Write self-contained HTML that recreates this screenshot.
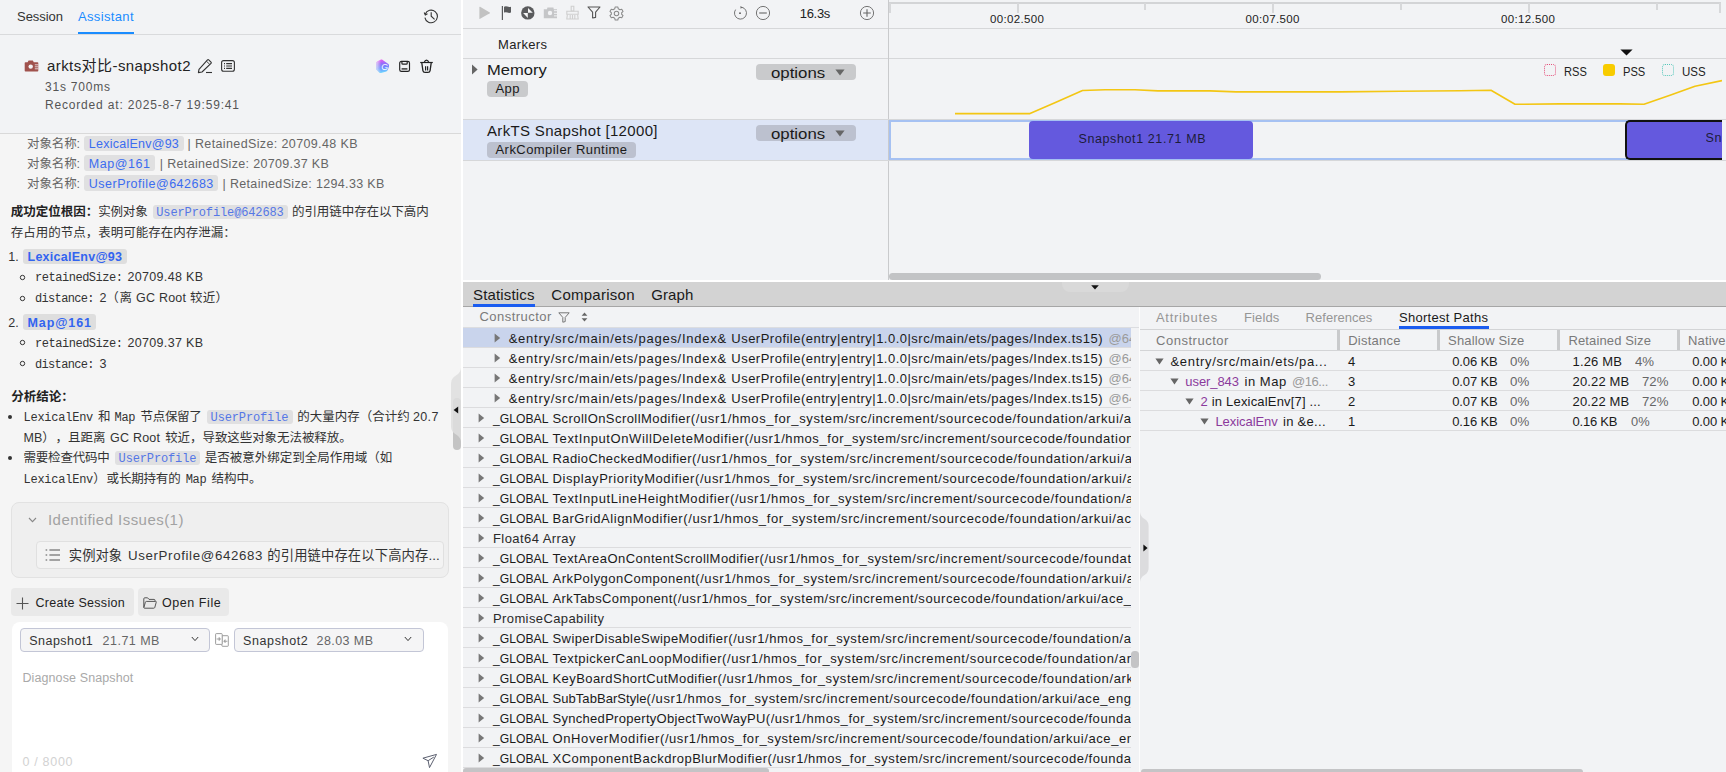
<!DOCTYPE html>
<html lang="zh"><head><meta charset="utf-8"><title>Profiler</title>
<style>
html,body{margin:0;padding:0;overflow:hidden;}
html{width:1726px;height:772px;}
body{width:1726px;height:772px;overflow:hidden;background:#f2f3f5;position:relative;
font-family:"Liberation Sans","Noto Sans CJK SC",sans-serif;}
.r{position:absolute;box-sizing:border-box;display:block;}
.t{position:absolute;white-space:pre;display:block;}
</style></head><body>
<aside class="assistant-panel">
<div class="r" style="left:0px;top:0px;width:461px;height:772px;background:#f2f3f5;"></div>
<div class="r" style="left:0px;top:134px;width:461px;height:638px;background:#f5f5f5;"></div>
<div class="r" style="left:461px;top:0px;width:2.3px;height:772px;background:#ffffff;"></div>
<div class="r" style="left:0px;top:34px;width:461px;height:1px;background:#d9dadc;"></div>
<div class="r" style="left:0px;top:133px;width:461px;height:1px;background:#d9d9d9;"></div>
<div class="r" style="left:78px;top:32px;width:56px;height:2px;background:#1a8cff;"></div>
<svg class="r" style="left:423px;top:8px;" width="16" height="16" viewBox="0 0 16 16"><path d="M2.2 6.2A6.3 6.3 0 1 1 1.9 9.6" fill="none" stroke="#333" stroke-width="1.1"/><path d="M1.2 4.6L2.3 6.9L4.5 5.8" fill="none" stroke="#333" stroke-width="1.1"/><path d="M8.2 4.2V8.2L11.6 11.4" fill="none" stroke="#333" stroke-width="1.1"/></svg>
<svg class="r" style="left:24px;top:60px;" width="15" height="12" viewBox="0 0 15 12"><path d="M1.5 2.2H3.6L4.6 0.4H8.8L9.8 2.2H13.5Q14.3 2.2 14.3 3V10.8Q14.3 11.6 13.5 11.6H1.5Q0.7 11.6 0.7 10.8V3Q0.7 2.2 1.5 2.2Z" fill="#a0524d"/><circle cx="6.7" cy="6.6" r="2.2" fill="#f2f3f5"/><path d="M10.8 4.8H14.3M10.8 6.8H14.3M10.8 8.8H14.3" stroke="#f2f3f5" stroke-width="0.8"/></svg>
<svg class="r" style="left:197px;top:58px;" width="16" height="16" viewBox="0 0 16 16"><path d="M2 11.4L10.5 1.8Q11.1 1.2 11.7 1.8L14 4.1Q14.6 4.7 14 5.3L5 14L1.4 14.6Z" fill="none" stroke="#333" stroke-width="1.1" stroke-linejoin="round"/><path d="M9.4 3.2L12.8 6.4" stroke="#333" stroke-width="0.9"/><path d="M9 14.5H15" stroke="#333" stroke-width="1.1"/></svg>
<svg class="r" style="left:221px;top:60px;" width="15" height="12" viewBox="0 0 15 12"><rect x="0.6" y="0.6" width="12.8" height="10.6" rx="2" fill="none" stroke="#333" stroke-width="1.1"/><path d="M3 3.6H4M5.2 3.6H11M3 6H4M5.2 6H11M3 8.4H4M5.2 8.4H11" stroke="#333" stroke-width="1.1"/></svg>
<svg class="r" style="left:375px;top:59px;" width="15" height="15" viewBox="0 0 15 15"><defs><linearGradient id="gb" x1="0.35" y1="0" x2="0.5" y2="1"><stop offset="0" stop-color="#ee5af0"/><stop offset="0.3" stop-color="#9a6cf8"/><stop offset="0.62" stop-color="#6e8cff"/><stop offset="1" stop-color="#6fdcff"/></linearGradient><linearGradient id="gf" x1="0" y1="0" x2="1" y2="0"><stop offset="0" stop-color="#f2f3f5" stop-opacity="0.75"/><stop offset="0.38" stop-color="#f2f3f5" stop-opacity="0"/></linearGradient></defs><path id="gp" d="M7 0.5L13.4 5Q14.4 6 14 7.4L12.8 11Q12.4 12 11.4 12.4L6 14Q5 14.2 4.2 13.4L1.6 10.8Q1.2 10.2 1.2 9.4V4Q1.2 3 2.2 2.4L6 0.6Q6.6 0.3 7 0.5Z" fill="url(#gb)"/><path d="M7 0.5L13.4 5Q14.4 6 14 7.4L12.8 11Q12.4 12 11.4 12.4L6 14Q5 14.2 4.2 13.4L1.6 10.8Q1.2 10.2 1.2 9.4V4Q1.2 3 2.2 2.4L6 0.6Q6.6 0.3 7 0.5Z" fill="url(#gf)"/><text x="6.2" y="11.4" font-size="8.6" font-weight="400" font-style="italic" fill="#fff" font-family="Liberation Sans,sans-serif">G</text></svg>
<svg class="r" style="left:398px;top:60px;" width="13" height="13" viewBox="0 0 13 13"><rect x="1.7" y="1.4" width="9.8" height="10" rx="1.7" fill="none" stroke="#222" stroke-width="1.15"/><path d="M3.9 1.4V3.3Q3.9 4.2 4.8 4.2H8.3Q9.2 4.2 9.2 3.3V1.4" fill="none" stroke="#222" stroke-width="1.2"/><rect x="3.5" y="8" width="6" height="1.7" rx="0.5" fill="#555"/></svg>
<svg class="r" style="left:420px;top:59px;" width="14" height="15" viewBox="0 0 14 15"><path d="M0.2 3.5H12.8" stroke="#222" stroke-width="1.2"/><path d="M4.2 3.4Q5 1.2 6.5 1.2Q8 1.2 8.8 3.4" fill="none" stroke="#222" stroke-width="1.2"/><path d="M1.8 3.8L2.9 11.6Q3.2 13.4 5 13.4H8Q9.8 13.4 10.1 11.6L11.2 3.8" fill="none" stroke="#222" stroke-width="1.3"/><path d="M5.6 7.2V11.6M7.6 7.2V11.6" stroke="#222" stroke-width="1.2"/></svg>
<div class="r" style="left:84px;top:135.5px;width:99.8px;height:15.5px;background:#e0e0e1;border-radius:3px;"></div>
<div class="r" style="left:84px;top:155.3px;width:70.5px;height:15.5px;background:#e0e0e1;border-radius:3px;"></div>
<div class="r" style="left:84px;top:175.3px;width:133.5px;height:15.5px;background:#e0e0e1;border-radius:3px;"></div>
<div class="r" style="left:153px;top:205px;width:134.5px;height:14px;background:#e0e0e1;border-radius:3px;"></div>
<div class="r" style="left:23px;top:248.5px;width:103.5px;height:15.5px;background:#dedede;border-radius:3px;"></div>
<svg class="r" style="left:18.5px;top:273.5px;" width="7" height="7" viewBox="0 0 7 7"><circle cx="3.5" cy="3.5" r="2.2" fill="none" stroke="#333" stroke-width="1"/></svg>
<svg class="r" style="left:18.5px;top:294.5px;" width="7" height="7" viewBox="0 0 7 7"><circle cx="3.5" cy="3.5" r="2.2" fill="none" stroke="#333" stroke-width="1"/></svg>
<div class="r" style="left:23px;top:314.3px;width:72.6px;height:15.5px;background:#dedede;border-radius:3px;"></div>
<svg class="r" style="left:18.5px;top:339.2px;" width="7" height="7" viewBox="0 0 7 7"><circle cx="3.5" cy="3.5" r="2.2" fill="none" stroke="#333" stroke-width="1"/></svg>
<svg class="r" style="left:18.5px;top:360.2px;" width="7" height="7" viewBox="0 0 7 7"><circle cx="3.5" cy="3.5" r="2.2" fill="none" stroke="#333" stroke-width="1"/></svg>
<div class="r" style="left:8.3px;top:415.3px;width:4px;height:4px;background:#333;border-radius:2px;"></div>
<div class="r" style="left:207px;top:410px;width:85.6px;height:14px;background:#e0e0e1;border-radius:3px;"></div>
<div class="r" style="left:8.3px;top:456px;width:4px;height:4px;background:#333;border-radius:2px;"></div>
<div class="r" style="left:115px;top:451.2px;width:85.4px;height:14px;background:#e0e0e1;border-radius:3px;"></div>
<div class="r" style="left:11px;top:502px;width:438px;height:76px;background:#efefef;border:1px solid #e2e2e2;border-radius:8px;"></div>
<svg class="r" style="left:28px;top:516px;" width="9" height="8" viewBox="0 0 9 8"><path d="M1 2L4.5 5.6L8 2" fill="none" stroke="#888" stroke-width="1.1"/></svg>
<div class="r" style="left:36px;top:541px;width:408px;height:28px;background:#f3f3f3;border:1px solid #e0e0e0;border-radius:4px;"></div>
<svg class="r" style="left:45px;top:548px;" width="16" height="14" viewBox="0 0 16 14"><path d="M0.6 2H2.2M4.4 2H15M0.6 7H2.2M4.4 7H15M0.6 12H2.2M4.4 12H15" stroke="#555" stroke-width="1.1"/></svg>
<div class="r" style="left:11px;top:588px;width:123px;height:28px;background:#e9e9e9;border-radius:4px;"></div>
<svg class="r" style="left:16px;top:597px;" width="13" height="13" viewBox="0 0 13 13"><path d="M6.5 0.5V12.5M0.5 6.5H12.5" stroke="#555" stroke-width="1.1"/></svg>
<div class="r" style="left:138px;top:588px;width:91px;height:28px;background:#e9e9e9;border-radius:4px;"></div>
<svg class="r" style="left:143px;top:597px;" width="14" height="12" viewBox="0 0 14 12"><path d="M0.8 10.4V1.8Q0.8 0.8 1.8 0.8H4.6L6 2.4H11Q12 2.4 12 3.4V4.4" fill="none" stroke="#555" stroke-width="1"/><path d="M0.8 10.6L2.4 5.2Q2.6 4.4 3.4 4.4H12.6Q13.6 4.4 13.2 5.4L11.8 10.4Q11.6 11.2 10.8 11.2H1.6Q0.8 11.2 0.8 10.6Z" fill="none" stroke="#555" stroke-width="1"/></svg>
<div class="r" style="left:12px;top:622px;width:436px;height:160px;background:#ffffff;border-radius:8px;"></div>
<div class="r" style="left:20.2px;top:628px;width:189.5px;height:23.5px;background:#f5f5f6;border:1px solid #c3c6d6;border-radius:4px;"></div>
<svg class="r" style="left:190.7px;top:636.4px;" width="8" height="6" viewBox="0 0 8 6"><path d="M0.8 1L4 4.6L7.2 1" fill="none" stroke="#333" stroke-width="1"/></svg>
<div class="r" style="left:234.2px;top:628px;width:189.5px;height:23.5px;background:#f5f5f6;border:1px solid #c3c6d6;border-radius:4px;"></div>
<svg class="r" style="left:404.4px;top:636.4px;" width="8" height="6" viewBox="0 0 8 6"><path d="M0.8 1L4 4.6L7.2 1" fill="none" stroke="#333" stroke-width="1"/></svg>
<svg class="r" style="left:215px;top:633px;" width="14" height="14" viewBox="0 0 14 14"><rect x="6.9" y="2.7" width="6.4" height="10.6" rx="0.7" fill="#fff" stroke="#8c8c8c" stroke-width="0.85"/><rect x="0.6" y="0.6" width="6.6" height="10.8" rx="0.7" fill="#fff" stroke="#8c8c8c" stroke-width="0.85"/><path d="M1.6 6H5M3.7 4.5L5.2 6L3.7 7.5" fill="none" stroke="#a2a2a2" stroke-width="1.1"/><path d="M12.4 8.2H9.2M10.5 6.7L9 8.2L10.5 9.7" fill="none" stroke="#a2a2a2" stroke-width="1.1"/></svg>
<svg class="r" style="left:422px;top:753px;" width="16" height="16" viewBox="0 0 16 16"><path d="M0.9 5.2L14.5 1.4L7.5 14.6L6.1 7.7Z" fill="none" stroke="#5c6070" stroke-width="1" stroke-linejoin="round"/><path d="M6.1 7.7L11.8 4.1" stroke="#5c6070" stroke-width="1"/></svg>
<div class="r" style="left:453px;top:398px;width:7.6px;height:51.5px;background:#c4c4c4;border-radius:4px;"></div>
<svg class="r" style="left:450px;top:368px;" width="11" height="74" viewBox="0 0 11 74"><path d="M11 0Q10.6 5 6 7.5Q1 10 1 16V58Q1 64 6 66.5Q10.6 69 11 74Z" fill="#dedede" fill-opacity="0.86"/></svg>
<svg class="r" style="left:453px;top:406.3px;" width="6" height="8" viewBox="0 0 6 8"><path d="M5.2 0.4V7.6L0.6 4Z" fill="#111"/></svg>
<span class="t" id="t0" style="left:17px;top:7.4px;font-size:13px;line-height:20px;color:#333;letter-spacing:-0.042px;">Session</span>
<span class="t" id="t1" style="left:78px;top:7.4px;font-size:13px;line-height:20px;color:#1a8cff;letter-spacing:0.344px;">Assistant</span>
<span class="t" id="t2" style="left:47px;top:55.4px;font-size:15px;line-height:22px;color:#222;letter-spacing:0.423px;">arkts对比-snapshot2</span>
<span class="t" id="t3" style="left:45px;top:78.4px;font-size:12px;line-height:18px;color:#555;letter-spacing:0.787px;">31s 700ms</span>
<span class="t" id="t4" style="left:45px;top:96.4px;font-size:12px;line-height:18px;color:#555;letter-spacing:0.823px;">Recorded at: 2025-8-7 19:59:41</span>
<span class="t" id="t5" style="left:27px;top:134.9px;font-size:12.5px;line-height:19px;color:#666;letter-spacing:-0.121px;">对象名称:</span>
<span class="t" id="t6" style="left:88.8px;top:134.9px;font-size:12.5px;line-height:19px;color:#3b6cf0;letter-spacing:0.246px;">LexicalEnv@93</span>
<span class="t" id="t7" style="left:187.5px;top:134.9px;font-size:12.5px;line-height:19px;color:#666;letter-spacing:0.373px;">| RetainedSize: 20709.48 KB</span>
<span class="t" id="t8" style="left:27px;top:154.7px;font-size:12.5px;line-height:19px;color:#666;letter-spacing:-0.121px;">对象名称:</span>
<span class="t" id="t9" style="left:88.8px;top:154.7px;font-size:12.5px;line-height:19px;color:#3b6cf0;letter-spacing:0.554px;">Map@161</span>
<span class="t" id="t10" style="left:159.8px;top:154.7px;font-size:12.5px;line-height:19px;color:#666;letter-spacing:0.334px;">| RetainedSize: 20709.37 KB</span>
<span class="t" id="t11" style="left:27px;top:174.7px;font-size:12.5px;line-height:19px;color:#666;letter-spacing:-0.121px;">对象名称:</span>
<span class="t" id="t12" style="left:88.8px;top:174.7px;font-size:12.5px;line-height:19px;color:#3b6cf0;letter-spacing:0.486px;">UserProfile@642683</span>
<span class="t" id="t13" style="left:222.5px;top:174.7px;font-size:12.5px;line-height:19px;color:#666;letter-spacing:0.338px;">| RetainedSize: 1294.33 KB</span>
<span class="t" id="t14" style="left:10.8px;top:203.4px;font-size:12.5px;line-height:19px;color:#222;font-weight:700;">成功定位根因：</span>
<span class="t" id="t15" style="left:98.2px;top:203.4px;font-size:12.5px;line-height:19px;color:#333;letter-spacing:-0.172px;">实例对象</span>
<span class="t" id="t16" style="left:156.3px;top:203.9px;font-size:12px;line-height:18px;color:#5577e6;font-family:'Liberation Mono','Noto Sans CJK SC',monospace;letter-spacing:-0.125px;">UserProfile@642683</span>
<span class="t" id="t17" style="left:292px;top:203.4px;font-size:12.5px;line-height:19px;color:#333;letter-spacing:-0.072px;">的引用链中存在以下高内</span>
<span class="t" id="t18" style="left:10.8px;top:224.1px;font-size:12.5px;line-height:19px;color:#333;">存占用的节点，表明可能存在内存泄漏：</span>
<span class="t" id="t19" style="left:8.3px;top:247.9px;font-size:12.5px;line-height:19px;color:#333;">1.</span>
<span class="t" id="t20" style="left:27.5px;top:247.9px;font-size:12.5px;line-height:19px;color:#3264f0;font-weight:700;letter-spacing:0.258px;">LexicalEnv@93</span>
<span class="t" id="t21" style="left:35px;top:268.9px;font-size:12px;line-height:18px;color:#333;font-family:'Liberation Mono','Noto Sans CJK SC',monospace;letter-spacing:-0.469px;">retainedSize:</span>
<span class="t" id="t22" style="left:127.5px;top:268.4px;font-size:12.5px;line-height:19px;color:#333;letter-spacing:0.320px;">20709.48 KB</span>
<span class="t" id="t23" style="left:35px;top:289.9px;font-size:12px;line-height:18px;color:#333;font-family:'Liberation Mono','Noto Sans CJK SC',monospace;letter-spacing:-0.664px;">distance:</span>
<span class="t" id="t24" style="left:99.5px;top:289.4px;font-size:12.5px;line-height:19px;color:#333;">2</span>
<span class="t" id="t25" style="left:106.3px;top:289.4px;font-size:12.5px;line-height:19px;color:#333;">（</span>
<span class="t" id="t26" style="left:119.6px;top:289.4px;font-size:12.5px;line-height:19px;color:#333;letter-spacing:0.229px;">离 GC Root 较近</span>
<span class="t" id="t27" style="left:215.6px;top:289.4px;font-size:12.5px;line-height:19px;color:#333;">）</span>
<span class="t" id="t28" style="left:8.3px;top:313.7px;font-size:12.5px;line-height:19px;color:#333;">2.</span>
<span class="t" id="t29" style="left:27.5px;top:313.7px;font-size:12.5px;line-height:19px;color:#3264f0;font-weight:700;letter-spacing:0.909px;">Map@161</span>
<span class="t" id="t30" style="left:35px;top:334.6px;font-size:12px;line-height:18px;color:#333;font-family:'Liberation Mono','Noto Sans CJK SC',monospace;letter-spacing:-0.469px;">retainedSize:</span>
<span class="t" id="t31" style="left:127.5px;top:334.1px;font-size:12.5px;line-height:19px;color:#333;letter-spacing:0.320px;">20709.37 KB</span>
<span class="t" id="t32" style="left:35px;top:355.6px;font-size:12px;line-height:18px;color:#333;font-family:'Liberation Mono','Noto Sans CJK SC',monospace;letter-spacing:-0.664px;">distance:</span>
<span class="t" id="t33" style="left:99.5px;top:355.1px;font-size:12.5px;line-height:19px;color:#333;">3</span>
<span class="t" id="t34" style="left:11.2px;top:388.2px;font-size:12.5px;line-height:19px;color:#222;font-weight:700;">分析结论：</span>
<span class="t" id="t35" style="left:23.5px;top:408.7px;font-size:12px;line-height:18px;color:#333;font-family:'Liberation Mono','Noto Sans CJK SC',monospace;letter-spacing:-0.246px;">LexicalEnv</span>
<span class="t" id="t36" style="left:98px;top:408.2px;font-size:12.5px;line-height:19px;color:#333;">和</span>
<span class="t" id="t37" style="left:114.6px;top:408.7px;font-size:12px;line-height:18px;color:#333;font-family:'Liberation Mono','Noto Sans CJK SC',monospace;letter-spacing:-0.405px;">Map</span>
<span class="t" id="t38" style="left:140.5px;top:408.2px;font-size:12.5px;line-height:19px;color:#333;letter-spacing:-0.304px;">节点保留了</span>
<span class="t" id="t39" style="left:210.6px;top:408.7px;font-size:12px;line-height:18px;color:#5577e6;font-family:'Liberation Mono','Noto Sans CJK SC',monospace;letter-spacing:-0.142px;">UserProfile</span>
<span class="t" id="t40" style="left:297.2px;top:408.2px;font-size:12.5px;line-height:19px;color:#333;">的大量内存（合计约</span>
<span class="t" id="t41" style="left:413px;top:408.2px;font-size:12.5px;line-height:19px;color:#333;letter-spacing:0.352px;">20.7</span>
<span class="t" id="t42" style="left:23.5px;top:429px;font-size:12.5px;line-height:19px;color:#333;">MB）</span>
<span class="t" id="t43" style="left:55.5px;top:429px;font-size:12.5px;line-height:19px;color:#333;">，且距离</span>
<span class="t" id="t44" style="left:110px;top:429px;font-size:12.5px;line-height:19px;color:#333;letter-spacing:0.227px;">GC Root</span>
<span class="t" id="t45" style="left:165.2px;top:429px;font-size:12.5px;line-height:19px;color:#333;letter-spacing:-0.073px;">较近，导致这些对象无法被释放。</span>
<span class="t" id="t46" style="left:23.5px;top:449.4px;font-size:12.5px;line-height:19px;color:#333;letter-spacing:-0.203px;">需要检查代码中</span>
<span class="t" id="t47" style="left:118.6px;top:449.9px;font-size:12px;line-height:18px;color:#5577e6;font-family:'Liberation Mono','Noto Sans CJK SC',monospace;letter-spacing:-0.142px;">UserProfile</span>
<span class="t" id="t48" style="left:204.7px;top:449.4px;font-size:12.5px;line-height:19px;color:#333;">是否被意外绑定到全局作用域（如</span>
<span class="t" id="t49" style="left:23.5px;top:470.9px;font-size:12px;line-height:18px;color:#333;font-family:'Liberation Mono','Noto Sans CJK SC',monospace;letter-spacing:-0.246px;">LexicalEnv</span>
<span class="t" id="t50" style="left:93.3px;top:470.4px;font-size:12.5px;line-height:19px;color:#333;">）</span>
<span class="t" id="t51" style="left:106.6px;top:470.4px;font-size:12.5px;line-height:19px;color:#333;letter-spacing:-0.183px;">或长期持有的</span>
<span class="t" id="t52" style="left:185.8px;top:470.9px;font-size:12px;line-height:18px;color:#333;font-family:'Liberation Mono','Noto Sans CJK SC',monospace;letter-spacing:-0.405px;">Map</span>
<span class="t" id="t53" style="left:211.4px;top:470.4px;font-size:12.5px;line-height:19px;color:#333;">结构中。</span>
<span class="t" id="t54" style="left:48px;top:508.5px;font-size:15px;line-height:22px;color:#a2a2a2;letter-spacing:0.456px;">Identified Issues(1)</span>
<span class="t" id="t55" style="left:68.8px;top:546.4px;font-size:13.3px;line-height:20px;color:#333;letter-spacing:0.037px;">实例对象</span>
<span class="t" id="t56" style="left:127.9px;top:546.4px;font-size:13.3px;line-height:20px;color:#333;letter-spacing:0.645px;">UserProfile@642683</span>
<span class="t" id="t57" style="left:267.3px;top:546.4px;font-size:13.3px;line-height:20px;color:#333;letter-spacing:0.132px;">的引用链中存在以下高内存...</span>
<span class="t" id="t58" style="left:35.4px;top:594.4px;font-size:12.5px;line-height:19px;color:#222;letter-spacing:0.295px;">Create Session</span>
<span class="t" id="t59" style="left:162px;top:594.4px;font-size:12.5px;line-height:19px;color:#222;letter-spacing:0.562px;">Open File</span>
<span class="t" id="t60" style="left:29.3px;top:632px;font-size:12.5px;line-height:19px;color:#333;letter-spacing:0.465px;">Snapshot1</span>
<span class="t" id="t61" style="left:102.6px;top:632px;font-size:12.5px;line-height:19px;color:#666;letter-spacing:0.469px;">21.71 MB</span>
<span class="t" id="t62" style="left:243px;top:632px;font-size:12.5px;line-height:19px;color:#333;letter-spacing:0.627px;">Snapshot2</span>
<span class="t" id="t63" style="left:316.6px;top:632px;font-size:12.5px;line-height:19px;color:#666;letter-spacing:0.412px;">28.03 MB</span>
<span class="t" id="t64" style="left:22.4px;top:669.4px;font-size:12.5px;line-height:19px;color:#a9a9a9;letter-spacing:0.112px;">Diagnose Snapshot</span>
<span class="t" id="t65" style="left:22.4px;top:752.9px;font-size:12.5px;line-height:19px;color:#d2d2d2;letter-spacing:0.702px;">0 / 8000</span>
</aside>
<main class="profiler">
<div class="r" style="left:463px;top:28px;width:1263px;height:1px;background:#d6d7d9;"></div>
<div class="r" style="left:463px;top:58px;width:1263px;height:1px;background:#d6d7d9;"></div>
<div class="r" style="left:888px;top:0px;width:1px;height:282px;background:#c9cacc;"></div>
<svg class="r" style="left:478px;top:6px;" width="13" height="14" viewBox="0 0 13 14"><path d="M1.4 1.2Q1.4 0.4 2.1 0.8L11.8 6.4Q12.4 6.8 11.8 7.2L2.1 12.8Q1.4 13.2 1.4 12.4Z" fill="#c2c2c2"/></svg>
<svg class="r" style="left:500px;top:5px;" width="12" height="16" viewBox="0 0 12 16"><path d="M2.4 1V15" stroke="#5a5b5d" stroke-width="1.2"/><path d="M4 1.7Q5.6 0.9 7.4 1.6Q9.2 2.3 11 1.7V7.5Q9.2 8.3 7.4 7.5Q5.6 6.8 4 7.6Z" fill="#5a5b5d"/></svg>
<svg class="r" style="left:520px;top:5px;" width="16" height="16" viewBox="0 0 16 16"><circle cx="7.8" cy="7.9" r="6.7" fill="#5a5b5d"/><path d="M8 2.9L12.8 7.7H8Z" fill="#f6f6f7"/><path d="M3.1 8.1H7.8V12.9Z" fill="#f6f6f7"/></svg>
<svg class="r" style="left:543px;top:7px;" width="15" height="12" viewBox="0 0 15 12"><path d="M0.8 2.3H4L4.4 0.4H10.4L10.8 2.3H14V11.2H0.8Z" fill="#c5c6c8"/><circle cx="7" cy="6" r="2.2" fill="#f2f3f5"/><path d="M11 3.7H14.2M11 6.3H14.2M11 8.9H14.2" stroke="#f2f3f5" stroke-width="1"/></svg>
<svg class="r" style="left:565px;top:5px;" width="15" height="15" viewBox="0 0 15 15"><path d="M6.2 1.2H8.8V6H6.2Z" fill="none" stroke="#cfcfcf" stroke-width="1.1"/><path d="M1.8 6.2H13.2V9.2H1.8Z" fill="none" stroke="#cfcfcf" stroke-width="1.1"/><path d="M2.4 9.4L1.8 14H13.2L12.6 9.4M5.2 10V14M7.5 10V14M9.8 10V14" fill="none" stroke="#cfcfcf" stroke-width="1.1"/></svg>
<svg class="r" style="left:587px;top:6px;" width="14" height="13" viewBox="0 0 14 13"><path d="M1 1H13L8.6 6.2V11.4L5.6 12V6.2Z" fill="none" stroke="#555" stroke-width="1.1" stroke-linejoin="round"/></svg>
<svg class="r" style="left:608.5px;top:5.5px;" width="15" height="15" viewBox="0 0 16 16"><path d="M6.6 1H9.4L9.9 3L11.6 4L13.6 3.4L15 5.8L13.5 7.2V8.8L15 10.2L13.6 12.6L11.6 12L9.9 13L9.4 15H6.6L6.1 13L4.4 12L2.4 12.6L1 10.2L2.5 8.8V7.2L1 5.8L2.4 3.4L4.4 4L6.1 3Z" fill="none" stroke="#8a8a8a" stroke-width="1.1" stroke-linejoin="round"/><circle cx="8" cy="8" r="2.4" fill="none" stroke="#8a8a8a" stroke-width="1.1"/></svg>
<svg class="r" style="left:733px;top:6px;" width="14" height="14" viewBox="0 0 14 14"><path d="M8.6 1.2A6 6 0 1 1 2.6 3.6" fill="none" stroke="#666" stroke-width="0.9"/><path d="M7.4 0L9.4 1.4L7.6 2.8" fill="#666"/><circle cx="7" cy="7.2" r="0.9" fill="#555"/></svg>
<svg class="r" style="left:755px;top:5px;" width="16" height="16" viewBox="0 0 16 16"><circle cx="8" cy="8" r="6.6" fill="none" stroke="#666" stroke-width="0.9"/><path d="M4.2 8H11.8" stroke="#666" stroke-width="1.1"/></svg>
<svg class="r" style="left:859px;top:5px;" width="16" height="16" viewBox="0 0 16 16"><circle cx="8" cy="8" r="6.6" fill="none" stroke="#666" stroke-width="0.9"/><path d="M4.2 8H11.8M8 4.2V11.8" stroke="#666" stroke-width="1.1"/></svg>
<div class="r" style="left:463px;top:119px;width:1263px;height:1px;background:#d6d7d9;"></div>
<div class="r" style="left:463px;top:120px;width:425px;height:40px;background:#dde5f6;"></div>
<div class="r" style="left:463px;top:160px;width:1263px;height:1px;background:#d6d7d9;"></div>
<svg class="r" style="left:471px;top:64px;" width="8" height="11" viewBox="0 0 8 11"><path d="M1 0.6L6.6 5.5L1 10.4Z" fill="#666"/></svg>
<div class="r" style="left:487px;top:81px;width:41px;height:16px;background:#c9cacc;border-radius:4px;"></div>
<div class="r" style="left:756px;top:64.3px;width:100px;height:15.5px;background:#c9cacc;border-radius:4px;"></div>
<svg class="r" style="left:835px;top:68.8px;" width="10" height="7" viewBox="0 0 10 7"><path d="M0.4 0.4H9.6L5 6.6Z" fill="#666"/></svg>
<div class="r" style="left:756px;top:125.3px;width:100px;height:15.5px;background:#bcc1cf;border-radius:4px;"></div>
<svg class="r" style="left:835px;top:129.8px;" width="10" height="7" viewBox="0 0 10 7"><path d="M0.4 0.4H9.6L5 6.6Z" fill="#666"/></svg>
<div class="r" style="left:487px;top:142px;width:148.5px;height:16px;background:#bcc1cf;border-radius:4px;"></div>
<div class="r" style="left:889px;top:2px;width:832px;height:2px;background:#d3d4d6;"></div>
<div class="r" style="left:889px;top:3px;width:2px;height:10.4px;background:#d7d8da;"></div>
<div class="r" style="left:1017px;top:3px;width:2px;height:10.4px;background:#d7d8da;"></div>
<div class="r" style="left:1272px;top:3px;width:2px;height:10.4px;background:#d7d8da;"></div>
<div class="r" style="left:1528px;top:3px;width:2px;height:10.4px;background:#d7d8da;"></div>
<div class="r" style="left:1719px;top:3px;width:2px;height:10.4px;background:#d7d8da;"></div>
<div class="r" style="left:1144px;top:3px;width:2px;height:6.8px;background:#d7d8da;"></div>
<div class="r" style="left:1400px;top:3px;width:2px;height:6.8px;background:#d7d8da;"></div>
<div class="r" style="left:1656px;top:3px;width:2px;height:6.8px;background:#d7d8da;"></div>
<svg class="r" style="left:1620px;top:48.5px;" width="13" height="7" viewBox="0 0 13 7"><path d="M0.4 0.4H12.6L6.5 6.6Z" fill="#111"/></svg>
<div class="r" style="left:1544px;top:64px;width:12px;height:12px;border:1px dotted #e4527c;border-radius:3px;"></div>
<div class="r" style="left:1603px;top:64px;width:12px;height:12px;background:#f8cc00;border-radius:3px;"></div>
<div class="r" style="left:1662px;top:64px;width:12px;height:12px;border:1px dotted #56c8ba;border-radius:3px;"></div>
<svg class="r" style="left:889px;top:60px;" width="833" height="58" viewBox="0 0 833 58"><polyline points="66,53.6 141,53.6 167,42.3 193.5,30.5 216,29.7 246,29.7 269,30.9 321,30.9 347,31.9 451,31.9 511,31.3 571,30.7 602,30.3 626,44.3 671,43.9 731,43.9 755,44.3 781,35.3 806,26.3 833,20.6" fill="none" stroke="#f3c613" stroke-width="1.6" stroke-linejoin="round"/></svg>
<div class="r" style="left:888.6px;top:120px;width:833.4px;height:40px;border:2px solid #a6c1f2;border-right:none;"></div>
<div class="r" style="left:1029px;top:121px;width:223.6px;height:38px;background:#6459de;border-radius:4px;"></div>
<div class="r" style="left:1625px;top:120px;width:97px;height:40px;background:#6459de;border:2px solid #111;border-radius:5px 0 0 5px;border-right:none;"></div>
<div class="r" style="left:889px;top:273px;width:431.5px;height:7px;background:#c2c3c5;border-radius:3.5px;"></div>
<div class="r" style="left:463px;top:279.8px;width:1263px;height:2.4px;background:#ffffff;"></div>
<div class="r" style="left:463px;top:282.2px;width:1263px;height:24.3px;background:#d3d3d3;"></div>
<div class="r" style="left:463px;top:306px;width:1263px;height:1px;background:#a6a6a6;"></div>
<div class="r" style="left:1062px;top:282px;width:67px;height:10px;background:#d9d9d9;border-radius:0 0 8px 8px;"></div>
<svg class="r" style="left:1091px;top:284.8px;" width="8" height="5" viewBox="0 0 8 5"><path d="M0.2 0.2H7.8L4 4.6Z" fill="#111"/></svg>
<div class="r" style="left:473px;top:303.8px;width:62.2px;height:3.1px;background:#1a5cf0;"></div>
<svg class="r" style="left:558px;top:311.5px;" width="12" height="11" viewBox="0 0 12 11"><path d="M0.8 0.8H11.2L7.2 5.4V9.6L4.8 10.2V5.4Z" fill="none" stroke="#777" stroke-width="1" stroke-linejoin="round"/></svg>
<svg class="r" style="left:580.5px;top:312.3px;" width="7" height="10" viewBox="0 0 7 10"><path d="M3.5 0.4L6.4 3.8H0.6Z M3.5 9.6L6.4 6.2H0.6Z" fill="#666"/></svg>
<div class="r" style="left:463px;top:327px;width:676px;height:1px;background:#dcdde0;"></div>
<div class="r" style="left:463px;top:328px;width:668px;height:20px;background:#c9d4ec;"></div>
<div class="r" style="left:463px;top:347px;width:668px;height:1px;background:#dcdcde;"></div>
<div class="r" style="left:463px;top:367px;width:668px;height:1px;background:#dcdcde;"></div>
<div class="r" style="left:463px;top:387px;width:668px;height:1px;background:#dcdcde;"></div>
<div class="r" style="left:463px;top:407px;width:668px;height:1px;background:#dcdcde;"></div>
<div class="r" style="left:463px;top:427px;width:668px;height:1px;background:#dcdcde;"></div>
<div class="r" style="left:463px;top:447px;width:668px;height:1px;background:#dcdcde;"></div>
<div class="r" style="left:463px;top:467px;width:668px;height:1px;background:#dcdcde;"></div>
<div class="r" style="left:463px;top:487px;width:668px;height:1px;background:#dcdcde;"></div>
<div class="r" style="left:463px;top:507px;width:668px;height:1px;background:#dcdcde;"></div>
<div class="r" style="left:463px;top:527px;width:668px;height:1px;background:#dcdcde;"></div>
<div class="r" style="left:463px;top:547px;width:668px;height:1px;background:#dcdcde;"></div>
<div class="r" style="left:463px;top:567px;width:668px;height:1px;background:#dcdcde;"></div>
<div class="r" style="left:463px;top:587px;width:668px;height:1px;background:#dcdcde;"></div>
<div class="r" style="left:463px;top:607px;width:668px;height:1px;background:#dcdcde;"></div>
<div class="r" style="left:463px;top:627px;width:668px;height:1px;background:#dcdcde;"></div>
<div class="r" style="left:463px;top:647px;width:668px;height:1px;background:#dcdcde;"></div>
<div class="r" style="left:463px;top:667px;width:668px;height:1px;background:#dcdcde;"></div>
<div class="r" style="left:463px;top:687px;width:668px;height:1px;background:#dcdcde;"></div>
<div class="r" style="left:463px;top:707px;width:668px;height:1px;background:#dcdcde;"></div>
<div class="r" style="left:463px;top:727px;width:668px;height:1px;background:#dcdcde;"></div>
<div class="r" style="left:463px;top:747px;width:668px;height:1px;background:#dcdcde;"></div>
<div class="r" style="left:463px;top:767px;width:668px;height:1px;background:#dcdcde;"></div>
<svg class="r" style="left:494.2px;top:333px;" width="7" height="10" viewBox="0 0 7 10"><path d="M0.6 0.4L6.2 5L0.6 9.6Z" fill="#777"/></svg>
<svg class="r" style="left:494.2px;top:353px;" width="7" height="10" viewBox="0 0 7 10"><path d="M0.6 0.4L6.2 5L0.6 9.6Z" fill="#777"/></svg>
<svg class="r" style="left:494.2px;top:373px;" width="7" height="10" viewBox="0 0 7 10"><path d="M0.6 0.4L6.2 5L0.6 9.6Z" fill="#777"/></svg>
<svg class="r" style="left:494.2px;top:393px;" width="7" height="10" viewBox="0 0 7 10"><path d="M0.6 0.4L6.2 5L0.6 9.6Z" fill="#777"/></svg>
<svg class="r" style="left:478.3px;top:413px;" width="7" height="10" viewBox="0 0 7 10"><path d="M0.6 0.4L6.2 5L0.6 9.6Z" fill="#777"/></svg>
<svg class="r" style="left:478.3px;top:433px;" width="7" height="10" viewBox="0 0 7 10"><path d="M0.6 0.4L6.2 5L0.6 9.6Z" fill="#777"/></svg>
<svg class="r" style="left:478.3px;top:453px;" width="7" height="10" viewBox="0 0 7 10"><path d="M0.6 0.4L6.2 5L0.6 9.6Z" fill="#777"/></svg>
<svg class="r" style="left:478.3px;top:473px;" width="7" height="10" viewBox="0 0 7 10"><path d="M0.6 0.4L6.2 5L0.6 9.6Z" fill="#777"/></svg>
<svg class="r" style="left:478.3px;top:493px;" width="7" height="10" viewBox="0 0 7 10"><path d="M0.6 0.4L6.2 5L0.6 9.6Z" fill="#777"/></svg>
<svg class="r" style="left:478.3px;top:513px;" width="7" height="10" viewBox="0 0 7 10"><path d="M0.6 0.4L6.2 5L0.6 9.6Z" fill="#777"/></svg>
<svg class="r" style="left:478.3px;top:533px;" width="7" height="10" viewBox="0 0 7 10"><path d="M0.6 0.4L6.2 5L0.6 9.6Z" fill="#777"/></svg>
<svg class="r" style="left:478.3px;top:553px;" width="7" height="10" viewBox="0 0 7 10"><path d="M0.6 0.4L6.2 5L0.6 9.6Z" fill="#777"/></svg>
<svg class="r" style="left:478.3px;top:573px;" width="7" height="10" viewBox="0 0 7 10"><path d="M0.6 0.4L6.2 5L0.6 9.6Z" fill="#777"/></svg>
<svg class="r" style="left:478.3px;top:593px;" width="7" height="10" viewBox="0 0 7 10"><path d="M0.6 0.4L6.2 5L0.6 9.6Z" fill="#777"/></svg>
<svg class="r" style="left:478.3px;top:613px;" width="7" height="10" viewBox="0 0 7 10"><path d="M0.6 0.4L6.2 5L0.6 9.6Z" fill="#777"/></svg>
<svg class="r" style="left:478.3px;top:633px;" width="7" height="10" viewBox="0 0 7 10"><path d="M0.6 0.4L6.2 5L0.6 9.6Z" fill="#777"/></svg>
<svg class="r" style="left:478.3px;top:653px;" width="7" height="10" viewBox="0 0 7 10"><path d="M0.6 0.4L6.2 5L0.6 9.6Z" fill="#777"/></svg>
<svg class="r" style="left:478.3px;top:673px;" width="7" height="10" viewBox="0 0 7 10"><path d="M0.6 0.4L6.2 5L0.6 9.6Z" fill="#777"/></svg>
<svg class="r" style="left:478.3px;top:693px;" width="7" height="10" viewBox="0 0 7 10"><path d="M0.6 0.4L6.2 5L0.6 9.6Z" fill="#777"/></svg>
<svg class="r" style="left:478.3px;top:713px;" width="7" height="10" viewBox="0 0 7 10"><path d="M0.6 0.4L6.2 5L0.6 9.6Z" fill="#777"/></svg>
<svg class="r" style="left:478.3px;top:733px;" width="7" height="10" viewBox="0 0 7 10"><path d="M0.6 0.4L6.2 5L0.6 9.6Z" fill="#777"/></svg>
<svg class="r" style="left:478.3px;top:753px;" width="7" height="10" viewBox="0 0 7 10"><path d="M0.6 0.4L6.2 5L0.6 9.6Z" fill="#777"/></svg>
<div class="r" style="left:1131.4px;top:650.6px;width:7.2px;height:17px;background:#c4c4c6;border-radius:3.5px;"></div>
<div class="r" style="left:463px;top:768px;width:306px;height:6px;background:#c4c4c6;border-radius:3px;"></div>
<div class="r" style="left:1139px;top:307px;width:1.4px;height:465px;background:#fdfdfd;"></div>
<svg class="r" style="left:1140px;top:512px;" width="9" height="70" viewBox="0 0 9 70"><path d="M0 0Q0.4 4.6 4.6 7Q8.6 9.4 8.6 14V56Q8.6 60.6 4.6 63Q0.4 65.4 0 70Z" fill="#dcdcde"/></svg>
<svg class="r" style="left:1142.6px;top:544px;" width="5" height="8" viewBox="0 0 5 8"><path d="M0.4 0.4V7.6L4.6 4Z" fill="#111"/></svg>
<div class="r" style="left:1399px;top:326px;width:89.5px;height:3px;background:#1a5cf0;"></div>
<div class="r" style="left:1140.4px;top:329px;width:586px;height:1px;background:#d3d4d6;"></div>
<div class="r" style="left:1140.4px;top:350px;width:586px;height:1px;background:#d3d4d6;"></div>
<div class="r" style="left:1337px;top:330px;width:3px;height:20px;background:#c9cacc;"></div>
<div class="r" style="left:1437px;top:330px;width:3px;height:20px;background:#c9cacc;"></div>
<div class="r" style="left:1557px;top:330px;width:3px;height:20px;background:#c9cacc;"></div>
<div class="r" style="left:1677px;top:330px;width:3px;height:20px;background:#c9cacc;"></div>
<div class="r" style="left:1140.4px;top:370px;width:586px;height:1px;background:#dcdcde;"></div>
<div class="r" style="left:1140.4px;top:390px;width:586px;height:1px;background:#dcdcde;"></div>
<div class="r" style="left:1140.4px;top:410px;width:586px;height:1px;background:#dcdcde;"></div>
<div class="r" style="left:1140.4px;top:430px;width:586px;height:1px;background:#dcdcde;"></div>
<svg class="r" style="left:1155px;top:358.3px;" width="9" height="7" viewBox="0 0 9 7"><path d="M0.4 0.4H8.6L4.5 6.4Z" fill="#666"/></svg>
<svg class="r" style="left:1170px;top:378.3px;" width="9" height="7" viewBox="0 0 9 7"><path d="M0.4 0.4H8.6L4.5 6.4Z" fill="#666"/></svg>
<svg class="r" style="left:1185px;top:398.3px;" width="9" height="7" viewBox="0 0 9 7"><path d="M0.4 0.4H8.6L4.5 6.4Z" fill="#666"/></svg>
<svg class="r" style="left:1200px;top:418.3px;" width="9" height="7" viewBox="0 0 9 7"><path d="M0.4 0.4H8.6L4.5 6.4Z" fill="#666"/></svg>
<div class="r" style="left:1141px;top:769px;width:442px;height:6px;background:#c4c4c6;border-radius:3px;"></div>
<span class="t" id="t66" style="left:799.8px;top:4.2px;font-size:13px;line-height:20px;color:#222;letter-spacing:-0.328px;">16.3s</span>
<span class="t" id="t67" style="left:498px;top:35px;font-size:13px;line-height:20px;color:#222;letter-spacing:0.341px;">Markers</span>
<span class="t" id="t68" style="left:487px;top:58.8px;font-size:15px;line-height:22px;color:#1a1a1a;transform:scaleX(1.1039);transform-origin:0 0;">Memory</span>
<span class="t" id="t69" style="left:495.5px;top:79px;font-size:13px;line-height:20px;color:#1a1a1a;letter-spacing:0.430px;">App</span>
<span class="t" id="t70" style="left:770.8px;top:61.7px;font-size:15px;line-height:22px;color:#1a1a1a;transform:scaleX(1.1204);transform-origin:0 0;">options</span>
<span class="t" id="t71" style="left:770.8px;top:122.7px;font-size:15px;line-height:22px;color:#1a1a1a;transform:scaleX(1.1204);transform-origin:0 0;">options</span>
<span class="t" id="t72" style="left:487px;top:119.8px;font-size:15px;line-height:22px;color:#1a1a1a;letter-spacing:0.336px;">ArkTS Snapshot [12000]</span>
<span class="t" id="t73" style="left:495.5px;top:140px;font-size:13px;line-height:20px;color:#1a1a1a;letter-spacing:0.442px;">ArkCompiler Runtime</span>
<span class="t" id="t74" style="left:989.9px;top:11.2px;font-size:11.5px;line-height:17px;color:#222;letter-spacing:0.354px;">00:02.500</span>
<span class="t" id="t75" style="left:1245.4px;top:11.2px;font-size:11.5px;line-height:17px;color:#222;letter-spacing:0.354px;">00:07.500</span>
<span class="t" id="t76" style="left:1500.9px;top:11.2px;font-size:11.5px;line-height:17px;color:#222;letter-spacing:0.354px;">00:12.500</span>
<span class="t" id="t77" style="left:1563.9px;top:61.9px;font-size:13px;line-height:20px;color:#222;transform:scaleX(0.8528);transform-origin:0 0;">RSS</span>
<span class="t" id="t78" style="left:1623.2px;top:61.9px;font-size:13px;line-height:20px;color:#222;transform:scaleX(0.8572);transform-origin:0 0;">PSS</span>
<span class="t" id="t79" style="left:1681.8px;top:61.9px;font-size:13px;line-height:20px;color:#222;transform:scaleX(0.8865);transform-origin:0 0;">USS</span>
<span class="t" id="t80" style="left:1078.5px;top:130.2px;font-size:12.5px;line-height:19px;color:#1c1c3a;letter-spacing:0.603px;">Snapshot1 21.71 MB</span>
<span class="t" id="t81" style="left:1705.5px;top:129.4px;font-size:12.5px;line-height:19px;color:#1c1c3a;letter-spacing:0.603px;width:16.5px;overflow:hidden;">Snapshot2 28.03 MB</span>
<span class="t" id="t82" style="left:473px;top:283.9px;font-size:15px;line-height:22px;color:#1a1a1a;letter-spacing:0.165px;">Statistics</span>
<span class="t" id="t83" style="left:551.3px;top:283.9px;font-size:15px;line-height:22px;color:#1a1a1a;letter-spacing:0.258px;">Comparison</span>
<span class="t" id="t84" style="left:651.3px;top:283.9px;font-size:15px;line-height:22px;color:#1a1a1a;letter-spacing:0.074px;">Graph</span>
<span class="t" id="t85" style="left:479.5px;top:306.6px;font-size:13px;line-height:20px;color:#7a7a7a;letter-spacing:0.460px;">Constructor</span>
<span class="t" id="t86" style="left:508.7px;top:328.6px;font-size:13px;line-height:20px;color:#1a1a1a;letter-spacing:0.746px;">&amp;entry/src/main/ets/pages/Index&amp;</span>
<span class="t" id="t87" style="left:731.3px;top:328.6px;font-size:13px;line-height:20px;color:#1a1a1a;letter-spacing:0.486px;">UserProfile(entry|entry|1.0.0|src/main/ets/pages/Index.ts15)</span>
<span class="t" id="t88" style="left:1108.5px;top:328.6px;font-size:13px;line-height:20px;color:#9a9a9a;width:22.5px;overflow:hidden;">@642683</span>
<span class="t" id="t89" style="left:508.7px;top:348.6px;font-size:13px;line-height:20px;color:#1a1a1a;letter-spacing:0.746px;">&amp;entry/src/main/ets/pages/Index&amp;</span>
<span class="t" id="t90" style="left:731.3px;top:348.6px;font-size:13px;line-height:20px;color:#1a1a1a;letter-spacing:0.486px;">UserProfile(entry|entry|1.0.0|src/main/ets/pages/Index.ts15)</span>
<span class="t" id="t91" style="left:1108.5px;top:348.6px;font-size:13px;line-height:20px;color:#9a9a9a;width:22.5px;overflow:hidden;">@642683</span>
<span class="t" id="t92" style="left:508.7px;top:368.6px;font-size:13px;line-height:20px;color:#1a1a1a;letter-spacing:0.746px;">&amp;entry/src/main/ets/pages/Index&amp;</span>
<span class="t" id="t93" style="left:731.3px;top:368.6px;font-size:13px;line-height:20px;color:#1a1a1a;letter-spacing:0.486px;">UserProfile(entry|entry|1.0.0|src/main/ets/pages/Index.ts15)</span>
<span class="t" id="t94" style="left:1108.5px;top:368.6px;font-size:13px;line-height:20px;color:#9a9a9a;width:22.5px;overflow:hidden;">@642683</span>
<span class="t" id="t95" style="left:508.7px;top:388.6px;font-size:13px;line-height:20px;color:#1a1a1a;letter-spacing:0.746px;">&amp;entry/src/main/ets/pages/Index&amp;</span>
<span class="t" id="t96" style="left:731.3px;top:388.6px;font-size:13px;line-height:20px;color:#1a1a1a;letter-spacing:0.486px;">UserProfile(entry|entry|1.0.0|src/main/ets/pages/Index.ts15)</span>
<span class="t" id="t97" style="left:1108.5px;top:388.6px;font-size:13px;line-height:20px;color:#9a9a9a;width:22.5px;overflow:hidden;">@642683</span>
<span class="t" id="t98" style="left:493px;top:408.6px;font-size:13px;line-height:20px;color:#1a1a1a;transform:scaleX(0.9365);transform-origin:0 0;">_GLOBAL</span>
<span class="t" id="t99" style="left:552.5px;top:408.6px;font-size:13px;line-height:20px;color:#1a1a1a;letter-spacing:0.438px;">ScrollOnScrollModifier(</span>
<span class="t" id="t100" style="left:695.65px;top:408.6px;font-size:13px;line-height:20px;color:#1a1a1a;letter-spacing:0.638px;width:435.35px;overflow:hidden;">/usr1/hmos_for_system/src/increment/sourcecode/foundation/arkui/ace_engine/frameworks/bridge/declarative_frontend/engine/arkComponent.js</span>
<span class="t" id="t101" style="left:493px;top:428.6px;font-size:13px;line-height:20px;color:#1a1a1a;transform:scaleX(0.9365);transform-origin:0 0;">_GLOBAL</span>
<span class="t" id="t102" style="left:552.5px;top:428.6px;font-size:13px;line-height:20px;color:#1a1a1a;letter-spacing:0.590px;">TextInputOnWillDeleteModifier(</span>
<span class="t" id="t103" style="left:749.4px;top:428.6px;font-size:13px;line-height:20px;color:#1a1a1a;letter-spacing:0.575px;width:381.6px;overflow:hidden;">/usr1/hmos_for_system/src/increment/sourcecode/foundation/arkui/ace_engine/frameworks/bridge/declarative_frontend/engine/arkComponent.js</span>
<span class="t" id="t104" style="left:493px;top:448.6px;font-size:13px;line-height:20px;color:#1a1a1a;transform:scaleX(0.9365);transform-origin:0 0;">_GLOBAL</span>
<span class="t" id="t105" style="left:552.5px;top:448.6px;font-size:13px;line-height:20px;color:#1a1a1a;letter-spacing:0.398px;">RadioCheckedModifier(</span>
<span class="t" id="t106" style="left:696.9px;top:448.6px;font-size:13px;line-height:20px;color:#1a1a1a;letter-spacing:0.634px;width:434.1px;overflow:hidden;">/usr1/hmos_for_system/src/increment/sourcecode/foundation/arkui/ace_engine/frameworks/bridge/declarative_frontend/engine/arkComponent.js</span>
<span class="t" id="t107" style="left:493px;top:468.6px;font-size:13px;line-height:20px;color:#1a1a1a;transform:scaleX(0.9365);transform-origin:0 0;">_GLOBAL</span>
<span class="t" id="t108" style="left:552.5px;top:468.6px;font-size:13px;line-height:20px;color:#1a1a1a;letter-spacing:0.572px;">DisplayPriorityModifier(</span>
<span class="t" id="t109" style="left:699.9px;top:468.6px;font-size:13px;line-height:20px;color:#1a1a1a;letter-spacing:0.618px;width:431.1px;overflow:hidden;">/usr1/hmos_for_system/src/increment/sourcecode/foundation/arkui/ace_engine/frameworks/bridge/declarative_frontend/engine/arkComponent.js</span>
<span class="t" id="t110" style="left:493px;top:488.6px;font-size:13px;line-height:20px;color:#1a1a1a;transform:scaleX(0.9365);transform-origin:0 0;">_GLOBAL</span>
<span class="t" id="t111" style="left:552.5px;top:488.6px;font-size:13px;line-height:20px;color:#1a1a1a;letter-spacing:0.604px;">TextInputLineHeightModifier(</span>
<span class="t" id="t112" style="left:734.9px;top:488.6px;font-size:13px;line-height:20px;color:#1a1a1a;letter-spacing:0.610px;width:396.1px;overflow:hidden;">/usr1/hmos_for_system/src/increment/sourcecode/foundation/arkui/ace_engine/frameworks/bridge/declarative_frontend/engine/arkComponent.js</span>
<span class="t" id="t113" style="left:493px;top:508.6px;font-size:13px;line-height:20px;color:#1a1a1a;transform:scaleX(0.9365);transform-origin:0 0;">_GLOBAL</span>
<span class="t" id="t114" style="left:552.5px;top:508.6px;font-size:13px;line-height:20px;color:#1a1a1a;letter-spacing:0.539px;">BarGridAlignModifier(</span>
<span class="t" id="t115" style="left:688.15px;top:508.6px;font-size:13px;line-height:20px;color:#1a1a1a;letter-spacing:0.643px;width:442.85px;overflow:hidden;">/usr1/hmos_for_system/src/increment/sourcecode/foundation/arkui/ace_engine/frameworks/bridge/declarative_frontend/engine/arkComponent.js</span>
<span class="t" id="t116" style="left:493px;top:528.6px;font-size:13px;line-height:20px;color:#2a2a2a;letter-spacing:0.431px;">Float64 Array</span>
<span class="t" id="t117" style="left:493px;top:548.6px;font-size:13px;line-height:20px;color:#1a1a1a;transform:scaleX(0.9365);transform-origin:0 0;">_GLOBAL</span>
<span class="t" id="t118" style="left:552.5px;top:548.6px;font-size:13px;line-height:20px;color:#1a1a1a;letter-spacing:0.453px;">TextAreaOnContentScrollModifier(</span>
<span class="t" id="t119" style="left:764.4px;top:548.6px;font-size:13px;line-height:20px;color:#1a1a1a;letter-spacing:0.605px;width:366.6px;overflow:hidden;">/usr1/hmos_for_system/src/increment/sourcecode/foundation/arkui/ace_engine/frameworks/bridge/declarative_frontend/engine/arkComponent.js</span>
<span class="t" id="t120" style="left:493px;top:568.6px;font-size:13px;line-height:20px;color:#1a1a1a;transform:scaleX(0.9365);transform-origin:0 0;">_GLOBAL</span>
<span class="t" id="t121" style="left:552.5px;top:568.6px;font-size:13px;line-height:20px;color:#1a1a1a;letter-spacing:0.475px;">ArkPolygonComponent(</span>
<span class="t" id="t122" style="left:700.15px;top:568.6px;font-size:13px;line-height:20px;color:#1a1a1a;letter-spacing:0.614px;width:430.85px;overflow:hidden;">/usr1/hmos_for_system/src/increment/sourcecode/foundation/arkui/ace_engine/frameworks/bridge/declarative_frontend/engine/arkComponent.js</span>
<span class="t" id="t123" style="left:493px;top:588.6px;font-size:13px;line-height:20px;color:#1a1a1a;transform:scaleX(0.9365);transform-origin:0 0;">_GLOBAL</span>
<span class="t" id="t124" style="left:552.5px;top:588.6px;font-size:13px;line-height:20px;color:#1a1a1a;letter-spacing:0.378px;">ArkTabsComponent(</span>
<span class="t" id="t125" style="left:677.65px;top:588.6px;font-size:13px;line-height:20px;color:#1a1a1a;letter-spacing:0.565px;width:453.35px;overflow:hidden;">/usr1/hmos_for_system/src/increment/sourcecode/foundation/arkui/ace_engine/frameworks/bridge/declarative_frontend/engine/arkComponent.js</span>
<span class="t" id="t126" style="left:493px;top:608.6px;font-size:13px;line-height:20px;color:#2a2a2a;letter-spacing:0.390px;">PromiseCapability</span>
<span class="t" id="t127" style="left:493px;top:628.6px;font-size:13px;line-height:20px;color:#1a1a1a;transform:scaleX(0.9365);transform-origin:0 0;">_GLOBAL</span>
<span class="t" id="t128" style="left:552.5px;top:628.6px;font-size:13px;line-height:20px;color:#1a1a1a;letter-spacing:0.422px;">SwiperDisableSwipeModifier(</span>
<span class="t" id="t129" style="left:733.15px;top:628.6px;font-size:13px;line-height:20px;color:#1a1a1a;letter-spacing:0.605px;width:397.85px;overflow:hidden;">/usr1/hmos_for_system/src/increment/sourcecode/foundation/arkui/ace_engine/frameworks/bridge/declarative_frontend/engine/arkComponent.js</span>
<span class="t" id="t130" style="left:493px;top:648.6px;font-size:13px;line-height:20px;color:#1a1a1a;transform:scaleX(0.9365);transform-origin:0 0;">_GLOBAL</span>
<span class="t" id="t131" style="left:552.5px;top:648.6px;font-size:13px;line-height:20px;color:#1a1a1a;letter-spacing:0.478px;">TextpickerCanLoopModifier(</span>
<span class="t" id="t132" style="left:726.9px;top:648.6px;font-size:13px;line-height:20px;color:#1a1a1a;letter-spacing:0.628px;width:404.1px;overflow:hidden;">/usr1/hmos_for_system/src/increment/sourcecode/foundation/arkui/ace_engine/frameworks/bridge/declarative_frontend/engine/arkComponent.js</span>
<span class="t" id="t133" style="left:493px;top:668.6px;font-size:13px;line-height:20px;color:#1a1a1a;transform:scaleX(0.9365);transform-origin:0 0;">_GLOBAL</span>
<span class="t" id="t134" style="left:552.5px;top:668.6px;font-size:13px;line-height:20px;color:#1a1a1a;letter-spacing:0.430px;">KeyBoardShortCutModifier(</span>
<span class="t" id="t135" style="left:722.4px;top:668.6px;font-size:13px;line-height:20px;color:#1a1a1a;letter-spacing:0.617px;width:408.6px;overflow:hidden;">/usr1/hmos_for_system/src/increment/sourcecode/foundation/arkui/ace_engine/frameworks/bridge/declarative_frontend/engine/arkComponent.js</span>
<span class="t" id="t136" style="left:493px;top:688.6px;font-size:13px;line-height:20px;color:#1a1a1a;transform:scaleX(0.9365);transform-origin:0 0;">_GLOBAL</span>
<span class="t" id="t137" style="left:552.5px;top:688.6px;font-size:13px;line-height:20px;color:#1a1a1a;letter-spacing:0.053px;">SubTabBarStyle(</span>
<span class="t" id="t138" style="left:651.4px;top:688.6px;font-size:13px;line-height:20px;color:#1a1a1a;letter-spacing:0.606px;width:479.6px;overflow:hidden;">/usr1/hmos_for_system/src/increment/sourcecode/foundation/arkui/ace_engine/frameworks/bridge/declarative_frontend/engine/arkComponent.js</span>
<span class="t" id="t139" style="left:493px;top:708.6px;font-size:13px;line-height:20px;color:#1a1a1a;transform:scaleX(0.9365);transform-origin:0 0;">_GLOBAL</span>
<span class="t" id="t140" style="left:552.5px;top:708.6px;font-size:13px;line-height:20px;color:#1a1a1a;letter-spacing:0.293px;">SynchedPropertyObjectTwoWayPU(</span>
<span class="t" id="t141" style="left:770.65px;top:708.6px;font-size:13px;line-height:20px;color:#1a1a1a;letter-spacing:0.566px;width:360.35px;overflow:hidden;">/usr1/hmos_for_system/src/increment/sourcecode/foundation/arkui/ace_engine/frameworks/bridge/declarative_frontend/engine/arkComponent.js</span>
<span class="t" id="t142" style="left:493px;top:728.6px;font-size:13px;line-height:20px;color:#1a1a1a;transform:scaleX(0.9365);transform-origin:0 0;">_GLOBAL</span>
<span class="t" id="t143" style="left:552.5px;top:728.6px;font-size:13px;line-height:20px;color:#1a1a1a;letter-spacing:0.614px;">OnHoverModifier(</span>
<span class="t" id="t144" style="left:664.9px;top:728.6px;font-size:13px;line-height:20px;color:#1a1a1a;letter-spacing:0.567px;width:466.1px;overflow:hidden;">/usr1/hmos_for_system/src/increment/sourcecode/foundation/arkui/ace_engine/frameworks/bridge/declarative_frontend/engine/arkComponent.js</span>
<span class="t" id="t145" style="left:493px;top:748.6px;font-size:13px;line-height:20px;color:#1a1a1a;transform:scaleX(0.9365);transform-origin:0 0;">_GLOBAL</span>
<span class="t" id="t146" style="left:552.5px;top:748.6px;font-size:13px;line-height:20px;color:#1a1a1a;letter-spacing:0.494px;">XComponentBackdropBlurModifier(</span>
<span class="t" id="t147" style="left:772.4px;top:748.6px;font-size:13px;line-height:20px;color:#1a1a1a;letter-spacing:0.532px;width:358.6px;overflow:hidden;">/usr1/hmos_for_system/src/increment/sourcecode/foundation/arkui/ace_engine/frameworks/bridge/declarative_frontend/engine/arkComponent.js</span>
<span class="t" id="t148" style="left:1156px;top:307.6px;font-size:13px;line-height:20px;color:#969696;letter-spacing:0.698px;">Attributes</span>
<span class="t" id="t149" style="left:1244px;top:307.6px;font-size:13px;line-height:20px;color:#969696;letter-spacing:0.122px;">Fields</span>
<span class="t" id="t150" style="left:1305.6px;top:307.6px;font-size:13px;line-height:20px;color:#969696;letter-spacing:0.024px;">References</span>
<span class="t" id="t151" style="left:1399px;top:307.6px;font-size:13px;line-height:20px;color:#1a1a1a;letter-spacing:0.286px;">Shortest Paths</span>
<span class="t" id="t152" style="left:1156px;top:330.6px;font-size:13px;line-height:20px;color:#7a7a7a;letter-spacing:0.520px;">Constructor</span>
<span class="t" id="t153" style="left:1348.2px;top:330.6px;font-size:13px;line-height:20px;color:#7a7a7a;letter-spacing:0.246px;">Distance</span>
<span class="t" id="t154" style="left:1448.1px;top:330.6px;font-size:13px;line-height:20px;color:#7a7a7a;letter-spacing:0.160px;">Shallow Size</span>
<span class="t" id="t155" style="left:1568.4px;top:330.6px;font-size:13px;line-height:20px;color:#7a7a7a;letter-spacing:0.137px;">Retained Size</span>
<span class="t" id="t156" style="left:1688.1px;top:330.6px;font-size:13px;line-height:20px;color:#7a7a7a;letter-spacing:0.128px;">Native Size</span>
<span class="t" id="t157" style="left:1170.5px;top:351.6px;font-size:13px;line-height:20px;color:#1a1a1a;letter-spacing:0.680px;">&amp;entry/src/main/ets/pa...</span>
<span class="t" id="t158" style="left:1185.3px;top:371.6px;font-size:13px;line-height:20px;color:#8b3a9c;letter-spacing:-0.074px;">user_843</span>
<span class="t" id="t159" style="left:1244.5px;top:371.6px;font-size:13px;line-height:20px;color:#1a1a1a;letter-spacing:0.534px;">in Map</span>
<span class="t" id="t160" style="left:1292px;top:371.6px;font-size:13px;line-height:20px;color:#9a9a9a;letter-spacing:-0.440px;">@16...</span>
<span class="t" id="t161" style="left:1200.4px;top:391.6px;font-size:13px;line-height:20px;color:#8b3a9c;">2</span>
<span class="t" id="t162" style="left:1211.8px;top:391.6px;font-size:13px;line-height:20px;color:#1a1a1a;letter-spacing:0.179px;">in LexicalEnv[7] ...</span>
<span class="t" id="t163" style="left:1215.4px;top:411.6px;font-size:13px;line-height:20px;color:#8b3a9c;letter-spacing:-0.053px;">LexicalEnv</span>
<span class="t" id="t164" style="left:1283px;top:411.6px;font-size:13px;line-height:20px;color:#1a1a1a;letter-spacing:0.290px;">in &amp;e...</span>
<span class="t" id="t165" style="left:1348px;top:351.6px;font-size:13px;line-height:20px;color:#1a1a1a;">4</span>
<span class="t" id="t166" style="left:1452.3px;top:351.6px;font-size:13px;line-height:20px;color:#1a1a1a;letter-spacing:-0.161px;">0.06 KB</span>
<span class="t" id="t167" style="left:1510.3px;top:351.6px;font-size:13px;line-height:20px;color:#666;transform:scaleX(1.0214);transform-origin:0 0;">0%</span>
<span class="t" id="t168" style="left:1572.6px;top:351.6px;font-size:13px;line-height:20px;color:#1a1a1a;letter-spacing:0.146px;">1.26 MB</span>
<span class="t" id="t169" style="left:1634.6px;top:351.6px;font-size:13px;line-height:20px;color:#666;transform:scaleX(1.0161);transform-origin:0 0;">4%</span>
<span class="t" id="t170" style="left:1692.3px;top:351.6px;font-size:13px;line-height:20px;color:#1a1a1a;letter-spacing:-0.161px;">0.00 KB</span>
<span class="t" id="t171" style="left:1348px;top:371.6px;font-size:13px;line-height:20px;color:#1a1a1a;">3</span>
<span class="t" id="t172" style="left:1452.3px;top:371.6px;font-size:13px;line-height:20px;color:#1a1a1a;letter-spacing:-0.161px;">0.07 KB</span>
<span class="t" id="t173" style="left:1510.3px;top:371.6px;font-size:13px;line-height:20px;color:#666;transform:scaleX(1.0214);transform-origin:0 0;">0%</span>
<span class="t" id="t174" style="left:1572.6px;top:371.6px;font-size:13px;line-height:20px;color:#1a1a1a;letter-spacing:0.135px;">20.22 MB</span>
<span class="t" id="t175" style="left:1642.2px;top:371.6px;font-size:13px;line-height:20px;color:#666;transform:scaleX(1.0142);transform-origin:0 0;">72%</span>
<span class="t" id="t176" style="left:1692.3px;top:371.6px;font-size:13px;line-height:20px;color:#1a1a1a;letter-spacing:-0.161px;">0.00 KB</span>
<span class="t" id="t177" style="left:1348px;top:391.6px;font-size:13px;line-height:20px;color:#1a1a1a;">2</span>
<span class="t" id="t178" style="left:1452.3px;top:391.6px;font-size:13px;line-height:20px;color:#1a1a1a;letter-spacing:-0.161px;">0.07 KB</span>
<span class="t" id="t179" style="left:1510.3px;top:391.6px;font-size:13px;line-height:20px;color:#666;transform:scaleX(1.0214);transform-origin:0 0;">0%</span>
<span class="t" id="t180" style="left:1572.6px;top:391.6px;font-size:13px;line-height:20px;color:#1a1a1a;letter-spacing:0.135px;">20.22 MB</span>
<span class="t" id="t181" style="left:1642.2px;top:391.6px;font-size:13px;line-height:20px;color:#666;transform:scaleX(1.0142);transform-origin:0 0;">72%</span>
<span class="t" id="t182" style="left:1692.3px;top:391.6px;font-size:13px;line-height:20px;color:#1a1a1a;letter-spacing:-0.161px;">0.00 KB</span>
<span class="t" id="t183" style="left:1348px;top:411.6px;font-size:13px;line-height:20px;color:#1a1a1a;">1</span>
<span class="t" id="t184" style="left:1452.3px;top:411.6px;font-size:13px;line-height:20px;color:#1a1a1a;letter-spacing:-0.161px;">0.16 KB</span>
<span class="t" id="t185" style="left:1510.3px;top:411.6px;font-size:13px;line-height:20px;color:#666;transform:scaleX(1.0214);transform-origin:0 0;">0%</span>
<span class="t" id="t186" style="left:1572.6px;top:411.6px;font-size:13px;line-height:20px;color:#1a1a1a;letter-spacing:-0.244px;">0.16 KB</span>
<span class="t" id="t187" style="left:1630.6px;top:411.6px;font-size:13px;line-height:20px;color:#666;transform:scaleX(0.9895);transform-origin:0 0;">0%</span>
<span class="t" id="t188" style="left:1692.3px;top:411.6px;font-size:13px;line-height:20px;color:#1a1a1a;letter-spacing:-0.161px;">0.00 KB</span>
</main>
</body></html>
